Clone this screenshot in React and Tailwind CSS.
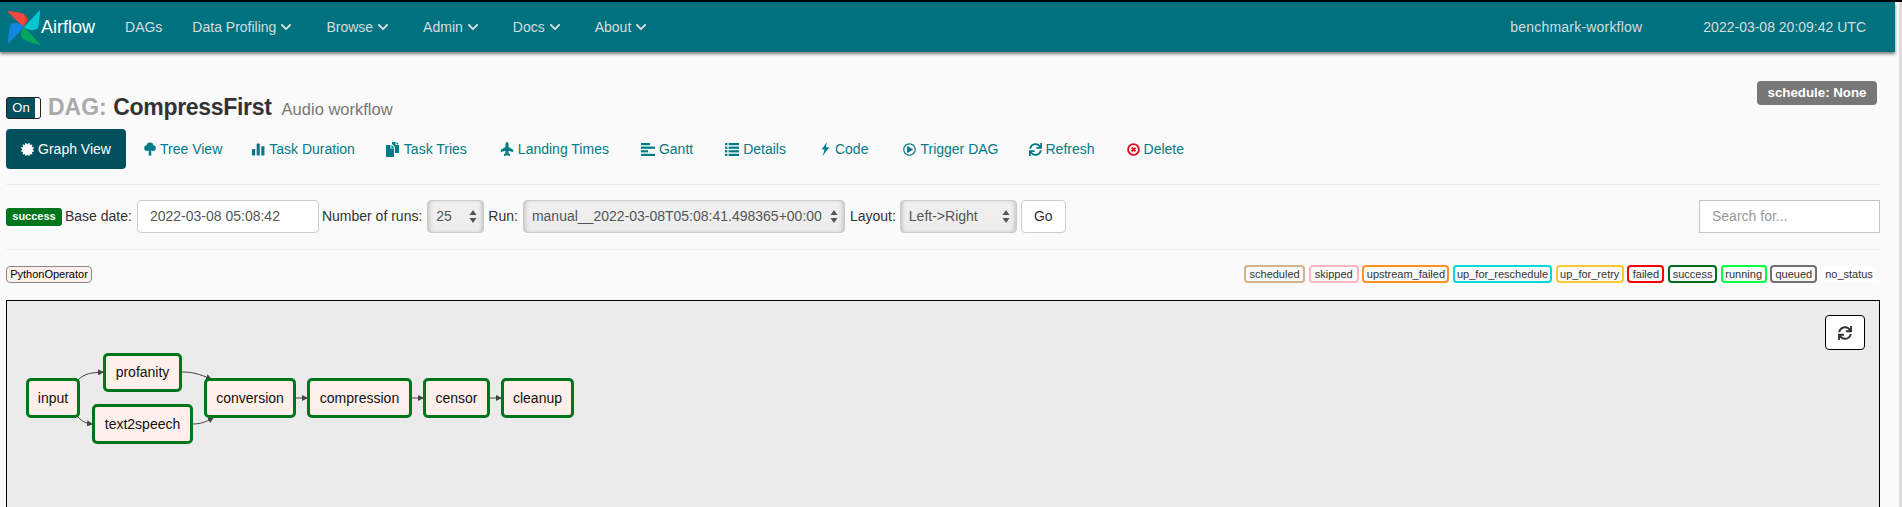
import React from 'react';
import { FaCertificate, FaChevronDown, FaPlane, FaRegPlayCircle, FaSync } from 'react-icons/fa';

const TreeIcon = ({ className }) => (
  <svg viewBox="0 0 14 15" className={className} fill="currentColor">
    <circle cx="7" cy="4" r="4" />
    <circle cx="3.6" cy="6.4" r="3.4" />
    <circle cx="10.4" cy="6.4" r="3.4" />
    <path d="M5.8 8 h2.4 l0.4 7 h-3.2z" />
  </svg>
);

const BarsIcon = ({ className }) => (
  <svg viewBox="0 0 14 14" className={className} fill="currentColor">
    <rect x="0" y="7" width="3.4" height="7" rx="0.5" />
    <rect x="5" y="1" width="3.4" height="13" rx="0.5" />
    <rect x="10" y="4" width="3.4" height="10" rx="0.5" />
  </svg>
);

const DuplicateIcon = ({ className }) => (
  <svg viewBox="0 0 14 15" className={className} fill="currentColor">
    <path d="M0 3 h4.5 v3.5 h3.5 V15 H0z" />
    <path d="M5.5 3 L8 5.5 V6 H5.5z" />
    <path d="M6 0 h3.5 v3 h3.5 v8 H9 V5 L6 2z" />
    <path d="M10.5 0 L13 2.2 H10.5z" />
  </svg>
);

const GanttIcon = ({ className }) => (
  <svg viewBox="0 0 14 13" className={className} fill="currentColor">
    <rect x="0" y="0" width="9" height="2.2" />
    <rect x="0" y="3.6" width="14" height="2.2" />
    <rect x="0" y="7.2" width="7" height="2.2" />
    <rect x="0" y="10.8" width="14" height="2.2" />
  </svg>
);

const ListIcon = ({ className }) => (
  <svg viewBox="0 0 14 13" className={className} fill="currentColor">
    {[0, 3.6, 7.2, 10.8].map((y) => (
      <g key={y}>
        <rect x="0" y={y} width="2.4" height="2.2" />
        <rect x="3.6" y={y} width="10.4" height="2.2" />
      </g>
    ))}
  </svg>
);

const BoltIcon = ({ className }) => (
  <svg viewBox="0 0 9 15" className={className} fill="currentColor">
    <path d="M6.5 0 L1 8 H4 L2 15 L9 5.6 H5.4z" />
  </svg>
);

const RemoveIcon = ({ className }) => (
  <svg viewBox="0 0 14 14" className={className} fill="none" stroke="currentColor">
    <circle cx="7" cy="7" r="5.8" strokeWidth="2" />
    <path d="M4.9 4.9 L9.1 9.1 M9.1 4.9 L4.9 9.1" strokeWidth="2" />
  </svg>
);

const Logo = () => (
  <svg viewBox="0 0 36 36" className="w-[36px] h-[36px]">
    <path d="M1 2 L17 18 C21 13 21 8 18 5 C13 3 6 2 1 2Z" fill="#f0483e" />
    <path d="M18 5 C20 8 20 13 17 18 L22 11 C21 8 20 6 18 5Z" fill="#e43921" />
    <path d="M34 1 L18 18 C23 22 28 22 32 19 C33 13 34 7 34 1Z" fill="#00c7d4" />
    <path d="M35 36 L18 18 C14 22 14 27 17 30 C23 33 29 35 35 36Z" fill="#04a85c" />
    <path d="M2 35 L18 18 C13 13 8 13 4 16 C3 22 2 29 2 35Z" fill="#1187e4" />
  </svg>
);

const NavLink = ({ children, caret, className = '' }) => (
  <span className={`flex items-center gap-[4px] text-[#d4dedf] text-[14px] ${className}`}>
    {children}
    {caret && <FaChevronDown className="w-[12px] h-[12px]" />}
  </span>
);

const Tab = ({ icon, label, active, danger, className }) => (
  <a className={`flex items-center gap-[4px] h-[40px] text-[14px] whitespace-nowrap ${className} ${active ? 'bg-[#00505e] text-white rounded-[4px]' : 'text-[#007a87]'}`}>
    <span className={danger ? 'text-[#e8071c]' : ''}>{icon}</span>
    {label}
  </a>
);

const SelectBox = ({ value, className }) => (
  <div className={`h-[33px] flex items-center justify-between pl-[8px] pr-[6px] border border-[#ccc] rounded-[4px] text-[14px] text-[#555] bg-gradient-to-b from-[#f0f0f0] to-[#ececec] shadow-[inset_3px_0_4px_-2px_#bbb,inset_-3px_0_4px_-2px_#bbb] ${className}`}>
    <span className="whitespace-nowrap">{value}</span>
    <svg viewBox="0 0 8 13" className="w-[8px] h-[13px]" fill="#555">
      <path d="M4 0 L7.5 5 H0.5z" />
      <path d="M4 13 L7.5 8 H0.5z" />
    </svg>
  </div>
);

const legend = [
  ['scheduled', 'border-[#d2b48c]', 'w-[61px]'],
  ['skipped', 'border-[#ffb6c1]', 'w-[50px]'],
  ['upstream_failed', 'border-[#ff9226]', 'w-[87px]'],
  ['up_for_reschedule', 'border-[#00dbd8]', 'w-[99px]'],
  ['up_for_retry', 'border-[#ffc72c]', 'w-[68px]'],
  ['failed', 'border-[#ff0000]', 'w-[37px]'],
  ['success', 'border-[#006b1f]', 'w-[49px]'],
  ['running', 'border-[#00ff40]', 'w-[46px]'],
  ['queued', 'border-[#707070]', 'w-[47px]'],
  ['no_status', 'border-[#fcfcfc] bg-white', 'w-[56px]'],
];

const nodes = [
  ['input', 'left-[19px] top-[77px] w-[54px] h-[40px]'],
  ['profanity', 'left-[96px] top-[52px] w-[79px] h-[39px]'],
  ['text2speech', 'left-[85px] top-[103px] w-[101px] h-[40px]'],
  ['conversion', 'left-[197px] top-[77px] w-[92px] h-[40px]'],
  ['compression', 'left-[300px] top-[77px] w-[105px] h-[40px]'],
  ['censor', 'left-[416px] top-[77px] w-[67px] h-[40px]'],
  ['cleanup', 'left-[494px] top-[77px] w-[73px] h-[40px]'],
];

// edges in the panel's coordinates
const Edges = () => (
  <svg className="absolute left-0 top-0 w-[600px] h-[160px]" fill="none" stroke="#444" strokeWidth="1">
    <defs>
      <marker id="arrow" markerWidth="6" markerHeight="6" refX="5" refY="3" orient="auto">
        <path d="M0 0 L6 3 L0 6Z" fill="#444" stroke="none" />
      </marker>
    </defs>
    <path d="M71 79 C78 72 84 72 96 71" markerEnd="url(#arrow)" />
    <path d="M71 116 C76 121 78 122 85 123" markerEnd="url(#arrow)" />
    <path d="M175 71 C186 71 192 73 204 78" markerEnd="url(#arrow)" />
    <path d="M186 123 C193 123 199 121 206 117" markerEnd="url(#arrow)" />
    <path d="M289 97 L300 97" markerEnd="url(#arrow)" />
    <path d="M405 97 L416 97" markerEnd="url(#arrow)" />
    <path d="M483 97 L494 97" markerEnd="url(#arrow)" />
  </svg>
);

export default function App() {
  return (
    <div className="relative w-[1902px] h-[507px] overflow-hidden bg-[#fafafa] text-[#333] text-[14px] font-['Liberation_Sans',sans-serif]">
      {/* scrollbar track at the right edge */}
      <div className="absolute right-0 top-[2px] bottom-0 w-[3px] bg-[#dcdcdc]" />

      {/* navbar */}
      <div className="h-[2px] bg-black" />
      <div className="w-[1895px] h-[50px] bg-[#00717f] shadow-[0_2px_3px_rgba(0,0,0,0.5)] flex items-center relative">
        <div className="ml-[6px] flex items-center">
          <Logo />
          <span className="text-white text-[18px] -ml-[1px]">Airflow</span>
        </div>
        <div className="ml-[30px] flex items-center gap-[34px]">
          <NavLink className="-mr-[4px]">DAGs</NavLink>
          <NavLink caret>Data Profiling</NavLink>
          <NavLink caret>Browse</NavLink>
          <NavLink caret>Admin</NavLink>
          <NavLink caret>Docs</NavLink>
          <NavLink caret>About</NavLink>
        </div>
        <div className="ml-auto mr-[29px] flex items-center gap-[61px]">
          <NavLink className="tracking-[0.2px]">benchmark-workflow</NavLink>
          <NavLink>2022-03-08 20:09:42 UTC</NavLink>
        </div>
      </div>

      <div className="pl-[6px] w-[1880px]">
        {/* title */}
        <div className="h-[77px] relative">
          <div className="absolute right-[3px] top-[29px] h-[24px] w-[120px] rounded-[4px] bg-[#777] text-white font-bold text-[13.3px] flex items-center justify-center">schedule: None</div>
          <div className="pt-[34px] flex items-center h-[77px]">
            <div className="w-[35px] h-[22px] rounded-[3px] bg-[#00505e] border border-[#222] flex">
              <span className="text-white text-[13px] flex-1 text-center leading-[20px]">On</span>
              <span className="w-[5px] bg-white rounded-r-[2px]" />
            </div>
            <h1 className="ml-[7px] text-[23px] font-bold text-[#aaa] leading-none">DAG: <span className="text-[#333] tracking-[-0.3px]">CompressFirst</span></h1>
            <span className="ml-[10px] mt-[3px] text-[16.5px] text-[#777]">Audio workflow</span>
          </div>
        </div>

        {/* tabs */}
        <div className="flex items-center">
          <Tab active className="w-[120px] justify-center" icon={<FaCertificate className="w-[13px] h-[13px]" />} label="Graph View" />
          <Tab className="ml-[18px]" icon={<TreeIcon className="w-[12px] h-[14px]" />} label="Tree View" />
          <Tab className="ml-[30px]" icon={<BarsIcon className="w-[13px] h-[14px]" />} label="Task Duration" />
          <Tab className="ml-[31px]" icon={<DuplicateIcon className="w-[14px] h-[15px]" />} label="Task Tries" />
          <Tab className="ml-[33px]" icon={<FaPlane className="w-[14px] h-[14px] -rotate-90" />} label="Landing Times" />
          <Tab className="ml-[32px]" icon={<GanttIcon className="w-[14px] h-[13px]" />} label="Gantt" />
          <Tab className="ml-[32px]" icon={<ListIcon className="w-[14px] h-[13px]" />} label="Details" />
          <Tab className="ml-[33px]" icon={<BoltIcon className="w-[12px] h-[14px]" />} label="Code" />
          <Tab className="ml-[35px]" icon={<FaRegPlayCircle className="w-[13px] h-[13px]" />} label="Trigger DAG" />
          <Tab className="ml-[30px]" icon={<FaSync className="w-[13px] h-[13px]" />} label="Refresh" />
          <Tab className="ml-[32px]" danger icon={<RemoveIcon className="w-[13px] h-[13px]" />} label="Delete" />
        </div>

        <div className="mt-[15px] border-t border-[#eee]" />

        {/* filters */}
        <div className="h-[33px] mt-[15px] flex items-center whitespace-nowrap">
          <span className="w-[56px] h-[18px] rounded-[3px] bg-[#00761c] text-white text-[11px] font-bold flex items-center justify-center">success</span>
          <span className="ml-[3px]">Base date:</span>
          <div className="ml-[5px] w-[182px] h-[33px] bg-white border border-[#ccc] rounded-[4px] pl-[12px] flex items-center text-[#555]">2022-03-08 05:08:42</div>
          <span className="ml-[3px]">Number of runs:</span>
          <SelectBox value="25" className="ml-[5px] w-[57px]" />
          <span className="ml-[4px]">Run:</span>
          <SelectBox value="manual__2022-03-08T05:08:41.498365+00:00" className="ml-[5px] w-[322px]" />
          <span className="ml-[5px]">Layout:</span>
          <SelectBox value="Left->Right" className="ml-[4px] w-[117px]" />
          <button className="ml-[4px] w-[45px] h-[33px] bg-white border border-[#ccc] rounded-[4px]">Go</button>
          <div className="ml-auto w-[181px] h-[33px] bg-white border border-[#c4c4c4] pl-[12px] flex items-center text-[#999]">Search for...</div>
        </div>

        <div className="mt-[16px] border-t border-[#eee]" />

        {/* legend */}
        <div className="mt-[15px] flex items-center justify-between h-[18px]">
          <span className="w-[86px] h-[17px] rounded-[4px] border border-[#888] bg-[#ffefeb] text-black text-[11px] flex items-center justify-center">PythonOperator</span>
          <div className="flex items-center gap-[3.67px] mr-[3px]">
            {legend.map(([name, border, width]) => (
              <span key={name} className={`${width} h-[18px] rounded-[4px] border-2 ${border} text-[#333] text-[11px] flex items-center justify-center`}>{name}</span>
            ))}
          </div>
        </div>

        {/* graph */}
        <div className="mt-[17px] h-[300px] bg-[#ebebeb] border border-black relative">
          <Edges />
          {nodes.map(([name, pos]) => (
            <div key={name} className={`absolute ${pos} rounded-[5px] border-[3px] border-[#00761c] bg-[#ffefeb] text-[#111] flex items-center justify-center`}>{name}</div>
          ))}
          <button className="absolute right-[14px] top-[14px] w-[40px] h-[35px] bg-white border border-black rounded-[4px] flex items-center justify-center">
            <FaSync className="w-[14px] h-[14px] text-[#333]" />
          </button>
        </div>
      </div>
    </div>
  );
}
